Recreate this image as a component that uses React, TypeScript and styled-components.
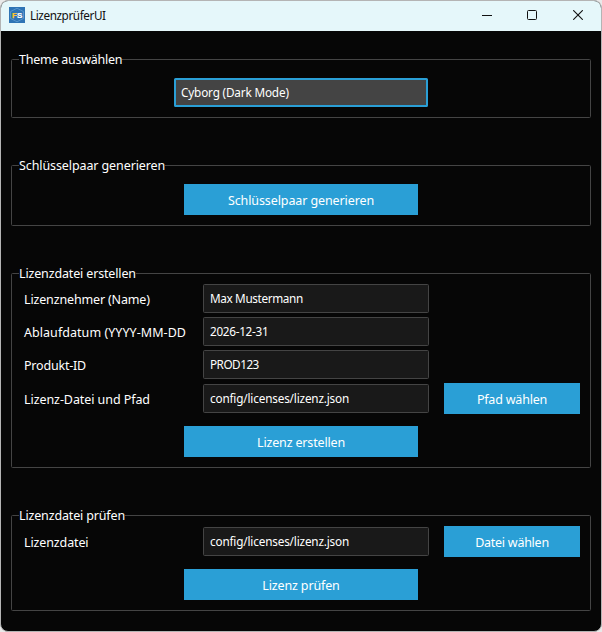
import React from "react";
import styled, { createGlobalStyle } from "styled-components";

const Global = createGlobalStyle`
  * { box-sizing: border-box; }
  html, body { margin: 0; padding: 0; background: #e9e9e9; overflow: hidden; }
  body, input, button { font-family: "Noto Sans", "Open Sans", sans-serif; }
`;

const Window = styled.main`
  width: 602px;
  height: 632px;
  border: 1px solid #b4b4b4;
  border-radius: 8px;
  background: #060606;
  overflow: hidden;
  color: #fff;
`;

const TitleBar = styled.header`
  display: flex;
  align-items: flex-start;
  height: 30px;
  padding-left: 8px;
  background: #e5f7fa;
  color: #111;
`;

const IconSlot = styled.span`
  display: flex;
  padding-top: 6px;
`;

const AppTitle = styled.h1`
  flex: 1;
  margin: 6px 0 0 5px;
  font-size: 11.75px;
  font-weight: 400;
  line-height: 16px;
  letter-spacing: -0.42px;
`;

const Caption = styled.button<{ $shift?: number }>`
  display: grid;
  place-items: center;
  width: 46px;
  height: 30px;
  padding: 0 0 2px ${(p) => p.$shift ?? 0}px;
  border: 0;
  background: transparent;
`;

const Content = styled.div`
  display: flex;
  flex-direction: column;
  gap: 47px;
  padding: 28px 10px 0;
`;

const Group = styled.fieldset<{ $height: number }>`
  min-width: 0;
  width: 580px;
  height: ${(p) => p.$height}px;
  margin: 0;
  padding: 0 10px 0 12px;
  border: 1px solid #444;
  border-radius: 1.5px;
`;

const Legend = styled.legend<{ $spacing: number }>`
  float: left;
  height: 18px;
  margin: -9px 0 -9px -5px;
  padding: 0;
  background: #060606;
  font-size: 12.5px;
  line-height: 18px;
  letter-spacing: ${(p) => p.$spacing}px;
  white-space: nowrap;
`;

const Body = styled.div<{ $top: number }>`
  clear: both;
  display: flex;
  flex-direction: column;
  padding-top: ${(p) => p.$top}px;
`;

const Combo = styled.div`
  align-self: center;
  width: 254px;
  height: 29px;
  margin-right: 2px;
  padding: 0 5px;
  border: 2px solid #2a9fd6;
  border-radius: 1.5px;
  background: #444;
  font-size: 11.75px;
  line-height: 25px;
  letter-spacing: -0.17px;
`;

const Action = styled.button<{ $width?: number; $top?: number; $spacing: number }>`
  align-self: center;
  flex: none;
  width: ${(p) => p.$width ?? 234}px;
  height: 31px;
  margin: ${(p) => p.$top ?? 0}px ${(p) => (p.$width ? 0 : 2)}px 0 0;
  padding: 3px 0 0;
  border: 0;
  background: #2a9fd6;
  color: #fff;
  font-size: 12.5px;
  line-height: 18px;
  letter-spacing: ${(p) => p.$spacing}px;
`;

const Row = styled.div<{ $height?: number }>`
  display: grid;
  grid-template-columns: 179px 226px 151px;
  align-items: center;
  height: ${(p) => p.$height ?? 33}px;
  & > button { margin-left: 15px; }
`;

const Label = styled.label<{ $spacing: number }>`
  padding-top: 2px;
  font-size: 12.5px;
  line-height: 18px;
  letter-spacing: ${(p) => p.$spacing}px;
  white-space: nowrap;
`;

const Entry = styled.input<{ $spacing: number }>`
  width: 226px;
  height: 29px;
  padding: 0 6px 2px;
  border: 1px solid #444;
  border-radius: 1.5px;
  outline: 0;
  background: #191919;
  color: #fff;
  font-size: 11.75px;
  letter-spacing: ${(p) => p.$spacing}px;
`;

const AppIcon = () => (
  <svg width="16" height="16" viewBox="0 0 16 16" fontFamily="Liberation Sans" fontWeight="700" fontSize="8">
    <rect width="16" height="16" fill="#2f74b5" />
    <path d="M8 1.2 14.5 4.6v6.8L8 14.8 1.5 11.4V4.6Z" fill="none" stroke="#6aa4d6" strokeWidth=".7" />
    <text x="3" y="11" fill="#ffc62e" stroke="#ffc62e" strokeWidth=".25">F</text>
    <text x="8" y="11" fill="#fff" stroke="#fff" strokeWidth=".2">S</text>
  </svg>
);

const App = () => (
  <>
    <Global />
    <Window>
      <TitleBar>
        <IconSlot><AppIcon /></IconSlot>
        <AppTitle>LizenzprüferUI</AppTitle>
        <Caption aria-label="Minimieren" $shift={2}>
          <svg width="10" height="10"><path d="M0 5.5h10" stroke="#111" /></svg>
        </Caption>
        <Caption aria-label="Maximieren">
          <svg width="10" height="10"><rect x=".5" y=".5" width="9" height="9" rx="1" fill="none" stroke="#111" /></svg>
        </Caption>
        <Caption aria-label="Schließen">
          <svg width="10" height="10"><path d="m.2.2 9.6 9.6m0-9.6L.2 9.8" stroke="#111" strokeWidth="1.1" /></svg>
        </Caption>
      </TitleBar>
      <Content>
        <Group $height={59}>
          <Legend $spacing={-0.25}>Theme auswählen</Legend>
          <Body $top={18}><Combo>Cyborg (Dark Mode)</Combo></Body>
        </Group>
        <Group $height={61}>
          <Legend $spacing={-0.1}>Schlüsselpaar generieren</Legend>
          <Body $top={18}><Action $spacing={-0.1}>Schlüsselpaar generieren</Action></Body>
        </Group>
        <Group $height={195}>
          <Legend $spacing={-0.15}>Lizenzdatei erstellen</Legend>
          <Body $top={8}>
            <Row><Label $spacing={-0.15}>Lizenznehmer (Name)</Label><Entry $spacing={-0.36} readOnly value="Max Mustermann" /></Row>
            <Row><Label $spacing={0.05}>Ablaufdatum (YYYY-MM-DD</Label><Entry $spacing={-0.3} readOnly value="2026-12-31" /></Row>
            <Row><Label $spacing={-0.2}>Produkt-ID</Label><Entry $spacing={-0.5} readOnly value="PROD123" /></Row>
            <Row $height={35}>
              <Label $spacing={-0.07}>Lizenz-Datei und Pfad</Label>
              <Entry $spacing={-0.17} readOnly value="config/licenses/lizenz.json" />
              <Action $width={136} $spacing={-0.2}>Pfad wählen</Action>
            </Row>
            <Action $top={10} $spacing={-0.16}>Lizenz erstellen</Action>
          </Body>
        </Group>
        <Group $height={96}>
          <Legend $spacing={-0.15}>Lizenzdatei prüfen</Legend>
          <Body $top={8}>
            <Row $height={35}>
              <Label $spacing={-0.12}>Lizenzdatei</Label>
              <Entry $spacing={-0.17} readOnly value="config/licenses/lizenz.json" />
              <Action $width={136} $spacing={-0.25}>Datei wählen</Action>
            </Row>
            <Action $top={10} $spacing={-0.15}>Lizenz prüfen</Action>
          </Body>
        </Group>
      </Content>
    </Window>
  </>
);

export default App;
